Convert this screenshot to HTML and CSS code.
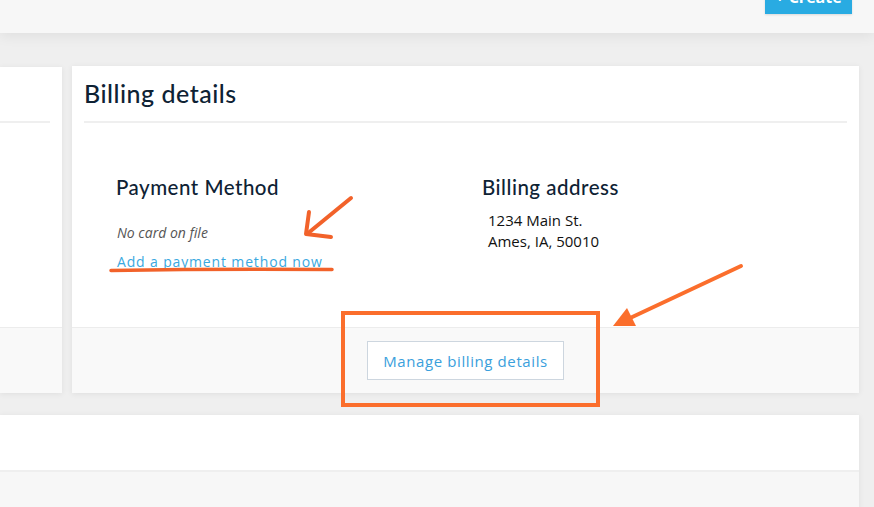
FILE: index.html
```html
<!DOCTYPE html>
<html lang="en">
<head>
    <meta charset="UTF-8">
    <meta name="viewport" content="width=device-width, initial-scale=1.0">
    <title>Account - Billing</title>
    <link rel="stylesheet" href="styles.css">
</head>
<body>

    <header class="topbar">
        <button class="create-btn">+ Create</button>
    </header>

    <main class="page">
        <div class="row">
            <section class="card card-side">
                <div class="card-head"><h2>&nbsp;</h2></div>
                <div class="card-body"></div>
                <div class="card-foot"></div>
            </section>

            <section class="card card-billing">
                <div class="card-head">
                    <h2>Billing details</h2>
                </div>
                <div class="card-body billing-cols">
                    <div class="billing-col">
                        <h3>Payment Method</h3>
                        <p class="muted">No card on file</p>
                        <a href="#" class="add-link">Add a payment method now</a>
                    </div>
                    <div class="billing-col">
                        <h3>Billing address</h3>
                        <p class="address">1234 Main St.<br>Ames, IA, 50010</p>
                    </div>
                </div>
                <div class="card-foot">
                    <button class="manage-btn">Manage billing details</button>
                </div>
            </section>
        </div>

        <section class="card card-wide">
            <div class="wide-top"></div>
            <div class="wide-bottom"></div>
        </section>
    </main>

    <!-- Hand-drawn markup on top of the page -->
    <svg class="markup" width="874" height="507" viewBox="0 0 874 507">
        <g fill="none" stroke="#f2622a" stroke-width="4" stroke-linecap="round" stroke-linejoin="round">
            <path d="M351 198 L307 234"/>
            <path d="M309 212 L306 234 L331 237"/>
            <path d="M111 270.5 Q220 268.5 332 269.5" stroke-width="3.5"/>
        </g>
        <rect x="343" y="313" width="255" height="92" fill="none" stroke="#fb6e2c" stroke-width="4"/>
        <path d="M741 266 L628 319" stroke="#fb6e2c" stroke-width="4" stroke-linecap="round"/>
        <polygon points="613,326 627,308 636,326" fill="#fb6e2c"/>
    </svg>

</body>
</html>
```

FILE: styles.css
```css
/* General styles */
body {
    margin: 0;
    padding: 0;
    background-color: #efefef;
    font-family: "Open Sans", Arial, sans-serif;
    color: #222;
    height: 507px;
    overflow: hidden;
    position: relative;
}

.topbar {
    height: 33px;
    background-color: #f7f7f7;
    box-shadow: 0 3px 14px rgba(0, 0, 0, 0.07);
    display: flex;
    justify-content: flex-end;
    padding-right: 22px;
    position: relative;
    z-index: 1;
}

.create-btn {
    margin-top: -20px;
    height: 34px;
    width: 87px;
    border: none;
    background-color: #29abe2;
    color: #fff;
    font-family: "Open Sans", Arial, sans-serif;
    font-weight: 700;
    font-size: 16px;
    padding: 0;
    box-shadow: 0 1px 2px rgba(0, 0, 0, 0.12);
}

.page {
    padding-top: 33px;
    width: 859px;
}

.row {
    display: flex;
    gap: 10px;
}

/* Cards */
.card {
    background-color: #fff;
    box-shadow: 0 1px 6px rgba(0, 0, 0, 0.07);
    display: flex;
    flex-direction: column;
}

.card-side {
    width: 62px;
    margin-top: 1px;
}

.card-billing {
    width: 787px;
}

.card-head {
    margin: 0 12px;
    height: 57px;
    border-bottom: 2px solid #efefef;
    box-sizing: border-box;
}

.card-side .card-head {
    margin-left: 0;
    height: 56px;
}

.card-head h2 {
    margin: 0;
    padding-top: 12px;
    font-family: Lato, "Open Sans", sans-serif;
    font-weight: 500;
    font-size: 25px;
    letter-spacing: 0.5px;
    color: #0e2234;
    line-height: 30px;
}

.card-body {
    height: 204px;
}

.card-foot {
    height: 65px;
    background-color: #f9f9f9;
    border-top: 1px solid #ececec;
    display: flex;
    justify-content: center;
    align-items: center;
}

/* Billing columns */
.billing-cols {
    display: grid;
    grid-template-columns: 366px 1fr;
    padding-left: 44px;
    padding-top: 51px;
    box-sizing: border-box;
}

.billing-col h3 {
    margin: 0;
    font-family: Lato, "Open Sans", sans-serif;
    font-weight: 500;
    font-size: 20.5px;
    letter-spacing: 0.5px;
    color: #0e2234;
    line-height: 26px;
}

.muted {
    margin: 23px 0 0 1px;
    font-style: italic;
    font-size: 14px;
    color: #555;
    line-height: 20px;
}

.add-link {
    display: inline-block;
    margin: 9px 0 0 1px;
    font-size: 14px;
    letter-spacing: 0.85px;
    color: #3aa8e0;
    text-decoration: none;
    font-weight: 500;
}

.address {
    margin: 10px 0 0 6px;
    font-size: 15px;
    line-height: 21px;
    color: #111;
}

.manage-btn {
    background-color: #fff;
    border: 1px solid #cdd6df;
    height: 39px;
    width: 197px;
    padding: 0;
    font-family: "Open Sans", Arial, sans-serif;
    font-size: 15px;
    font-weight: 500;
    letter-spacing: 0.6px;
    color: #3aa0dc;
    cursor: pointer;
}

/* Lower card */
.card-wide {
    margin-top: 22px;
}

.wide-top {
    height: 55px;
    border-bottom: 2px solid #efefef;
}

.wide-bottom {
    height: 40px;
    background-color: #f7f7f7;
}

/* Annotation overlay */
.markup {
    position: absolute;
    top: 0;
    left: 0;
    pointer-events: none;
    z-index: 2;
}
```
